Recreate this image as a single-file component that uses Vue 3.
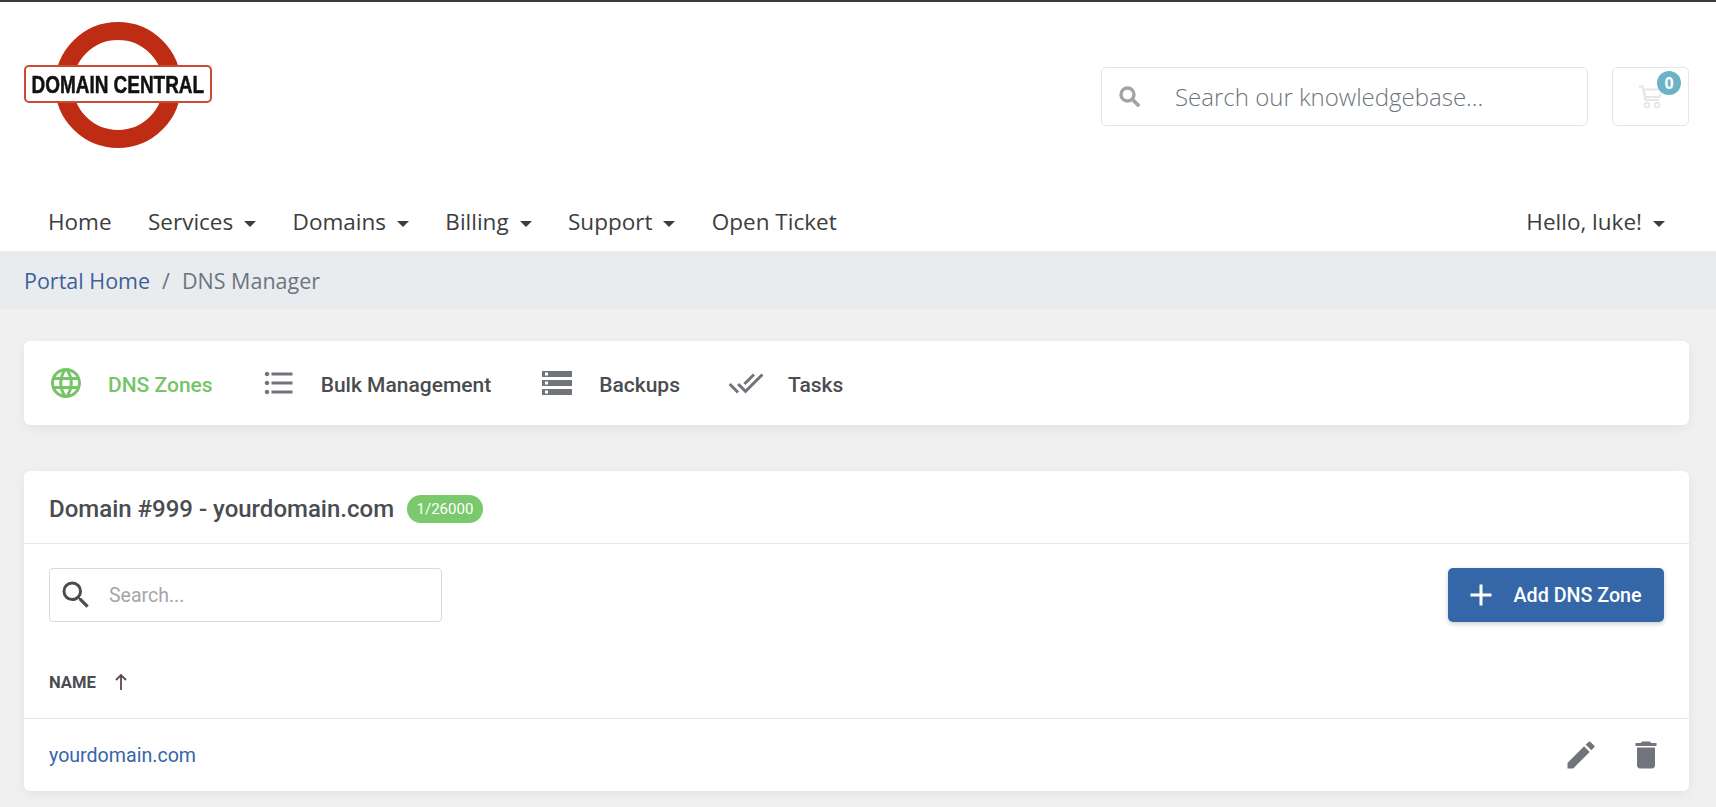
<script setup>
const navItems = [
  { label: 'Home' },
  { label: 'Services', caret: true },
  { label: 'Domains', caret: true },
  { label: 'Billing', caret: true },
  { label: 'Support', caret: true },
  { label: 'Open Ticket' },
]
</script>

<template>
  <div class="page">
    <header class="header">
      <div class="brand-row">
        <svg class="logo" width="190" height="128" viewBox="0 0 190 128">
          <circle cx="95" cy="63" r="54" fill="none" stroke="#bf2c14" stroke-width="18" />
          <rect x="2" y="44" width="186" height="36" rx="4" fill="#fff" stroke="#cc4a33" stroke-width="2" />
          <text class="logo-text" transform="translate(8.500 71) scale(0.79 1)">DOMAIN CENTRAL</text>
        </svg>
        <div class="tools">
          <div class="kb-search">
            <svg class="kb-icon" width="21" height="21" viewBox="0 0 21 21">
              <circle cx="8.5" cy="8.5" r="6.5" fill="none" stroke="#a3a3a3" stroke-width="3.4" />
              <path d="M13.5 13.5 19 19" stroke="#a3a3a3" stroke-width="3.8" stroke-linecap="round" />
            </svg>
            <span class="kb-placeholder">Search our knowledgebase...</span>
          </div>
          <div class="cart">
            <svg width="25" height="25" viewBox="0 0 25 25">
              <path d="M0.5 2.500h4l3 13.500h13.500" fill="none" stroke="#e6e6e6" stroke-width="2" />
              <path d="M5.500 5.500h18.500l-2.500 7.500H7.500z" fill="none" stroke="#e6e6e6" stroke-width="2" />
              <circle cx="9" cy="21" r="2.400" fill="none" stroke="#e6e6e6" stroke-width="1.800" />
              <circle cx="19" cy="21" r="2.400" fill="none" stroke="#e6e6e6" stroke-width="1.800" />
            </svg>
            <span class="cart-badge">0</span>
          </div>
        </div>
      </div>
      <nav class="nav">
        <a v-for="item in navItems" :key="item.label" class="nav-item">
          {{ item.label }}<i v-if="item.caret" class="caret"></i>
        </a>
        <a class="nav-item nav-user">Hello, luke!<i class="caret"></i></a>
      </nav>
    </header>

    <div class="crumbs">
      <a class="crumb-link">Portal Home</a>
      <span class="crumb-sep">/</span>
      <span class="crumb-current">DNS Manager</span>
    </div>

    <main class="content">
      <section class="card tabs">
        <a class="tab tab-active">
          <svg width="36" height="36" viewBox="0 0 24 24" fill="#75c568">
            <path d="M11.99 2C6.47 2 2 6.48 2 12s4.47 10 9.99 10C17.52 22 22 17.52 22 12S17.52 2 11.99 2zm6.93 6h-2.95c-.32-1.25-.78-2.45-1.38-3.56 1.84.63 3.37 1.91 4.33 3.56zM12 4.04c.83 1.2 1.48 2.53 1.91 3.96h-3.82c.43-1.43 1.08-2.76 1.91-3.96zM4.26 14C4.1 13.36 4 12.69 4 12s.1-1.36.26-2h3.38c-.08.66-.14 1.32-.14 2 0 .68.06 1.34.14 2H4.26zm.82 2h2.95c.32 1.25.78 2.45 1.38 3.56-1.84-.63-3.37-1.9-4.33-3.56zm2.95-8H5.08c.96-1.66 2.49-2.93 4.33-3.56C8.81 5.55 8.35 6.75 8.03 8zM12 19.96c-.83-1.2-1.48-2.53-1.91-3.96h3.82c-.43 1.43-1.08 2.76-1.91 3.96zM14.34 14H9.66c-.09-.66-.16-1.32-.16-2 0-.68.07-1.35.16-2h4.68c.09.65.16 1.32.16 2 0 .68-.07 1.34-.16 2zm.25 5.56c.6-1.11 1.06-2.31 1.38-3.56h2.95c-.96 1.65-2.49 2.93-4.33 3.56zM16.36 14c.08-.66.14-1.32.14-2 0-.68-.06-1.34-.14-2h3.38c.16.64.26 1.31.26 2s-.1 1.36-.26 2h-3.38z" />
          </svg>
          <span>DNS Zones</span>
        </a>
        <a class="tab">
          <svg width="36" height="36" viewBox="0 0 24 24" fill="#71757b">
            <path d="M4 10.5c-.83 0-1.5.67-1.5 1.5s.67 1.5 1.5 1.5 1.5-.67 1.5-1.5-.67-1.5-1.5-1.5zm0-6c-.83 0-1.5.67-1.5 1.5S3.17 7.500 4 7.500 5.500 6.830 5.500 6 4.830 4.500 4 4.500zm0 12c-.83 0-1.5.68-1.5 1.5s.68 1.5 1.5 1.5 1.5-.68 1.5-1.5-.67-1.5-1.5-1.5zM7 19h14v-2H7v2zm0-6h14v-2H7v2zm0-8v2h14V5H7z" />
          </svg>
          <span>Bulk Management</span>
        </a>
        <a class="tab">
          <svg width="36" height="36" viewBox="0 0 24 24" fill="#71757b">
            <path d="M2 20h20v-4H2v4zm2-3h2v2H4v-2zM2 4v4h20V4H2zm4 3H4V5h2v2zm-4 7h20v-4H2v4zm2-3h2v2H4v-2z" />
          </svg>
          <span>Backups</span>
        </a>
        <a class="tab">
          <svg width="36" height="36" viewBox="0 0 24 24" fill="#71757b">
            <path d="M18 7l-1.41-1.41-6.34 6.34 1.41 1.41L18 7zm4.24-1.41L11.66 16.17 7.48 12l-1.41 1.41L11.66 19l12-12-1.42-1.41zM.41 13.41L6 19l1.41-1.41L1.83 12 .41 13.41z" />
          </svg>
          <span>Tasks</span>
        </a>
      </section>

      <section class="card panel">
        <div class="panel-head">
          <h2 class="panel-title">Domain #999 - yourdomain.com</h2>
          <span class="pill">1/26000</span>
        </div>
        <div class="toolbar">
          <div class="search">
            <svg width="36" height="36" viewBox="0 0 24 24" fill="#4a4c50">
              <path d="M15.500 14h-.790l-.280-.270A6.470 6.470 0 0 0 16 9.500 6.500 6.500 0 1 0 9.500 16c1.610 0 3.090-.590 4.230-1.570l.270.280v.790l5 4.990L20.490 19l-4.990-5zm-6 0C7.010 14 5 11.990 5 9.500S7.010 5 9.500 5 14 7.010 14 9.500 11.990 14 9.500 14z" />
            </svg>
            <span class="search-placeholder">Search...</span>
          </div>
          <button class="add-btn">
            <svg width="36" height="36" viewBox="0 0 24 24" fill="#fff">
              <path d="M19 13h-6v6h-2v-6H5v-2h6V5h2v6h6v2z" />
            </svg>
            <span>Add DNS Zone</span>
          </button>
        </div>
        <div class="table-head">
          <span class="col-name">NAME</span>
          <svg width="14" height="18" viewBox="0 0 14 18" fill="none" stroke="#5b4b4b" stroke-width="1.800">
            <path d="M7 17V2M2 7l5-5 5 5" />
          </svg>
        </div>
        <div class="table-row">
          <a class="domain-link">yourdomain.com</a>
          <div class="row-actions">
            <svg width="36" height="36" viewBox="0 0 24 24" fill="#71757b">
              <path d="M3 17.250V21h3.750L17.810 9.940l-3.750-3.750L3 17.250zM20.710 7.040a1 1 0 0 0 0-1.410l-2.340-2.340a1 1 0 0 0-1.410 0l-1.830 1.830 3.750 3.750 1.830-1.830z" />
            </svg>
            <svg width="36" height="36" viewBox="0 0 24 24" fill="#71757b">
              <path d="M6 19c0 1.100.900 2 2 2h8c1.100 0 2-.900 2-2V7H6v12zM19 4h-3.500l-1-1h-5l-1 1H5v2h14V4z" />
            </svg>
          </div>
        </div>
      </section>
    </main>
  </div>
</template>

<style>
html, body { margin: 0; padding: 0; background: #f0f0f0; }
</style>

<style scoped>
.page {
  min-height: 807px;
  background: #f0f0f0;
  font-family: "Roboto", "Liberation Sans", sans-serif;
  overflow: hidden;
}
.header {
  background: #fff;
  border-top: 2px solid #3c3c3c;
}
.brand-row {
  display: flex;
  justify-content: space-between;
  align-items: flex-start;
  height: 189px;
  padding: 20px 27px 0 23px;
  box-sizing: border-box;
}
.logo { filter: blur(0.3px); }
.logo-text {
  font-family: "Liberation Sans", sans-serif;
  font-weight: 700;
  font-size: 24px;
  fill: #111;
  stroke: #111;
  stroke-width: 0.5px;
}
.tools { display: flex; gap: 24px; margin-top: 45px; }
.kb-search, .cart {
  height: 59px;
  box-sizing: border-box;
  border: 1px solid #e6e6e6;
  border-radius: 5px;
  display: flex;
  align-items: center;
  background: #fff;
}
.kb-search { width: 487px; padding-left: 17px; }
.kb-placeholder {
  margin-left: 35px;
  font-family: "Open Sans", sans-serif;
  font-weight: 300;
  font-size: 24px;
  color: #6c757d;
}
.cart { width: 77px; position: relative; padding-left: 25px; }
.cart-badge {
  position: absolute;
  top: 3px;
  right: 7px;
  width: 24px;
  height: 24px;
  border-radius: 50%;
  background: #6cb2c7;
  color: #fff;
  font: 700 16px/24px "Open Sans", sans-serif;
  text-align: center;
}
.nav {
  display: flex;
  height: 60px;
  padding: 0 27px 0 29.500px;
  align-items: center;
  font-family: "Open Sans", sans-serif;
  font-size: 22.500px;
  color: #3d3d3d;
}
.nav-item { padding: 0 18.200px; white-space: nowrap; }
.nav-item:first-child { padding-left: 18.500px; }
.nav-user { margin-left: auto; padding-right: 24px; }
.caret {
  display: inline-block;
  margin-left: 11px;
  vertical-align: 3px;
  border-top: 6px solid #3d3d3d;
  border-left: 6px solid transparent;
  border-right: 6px solid transparent;
}
.crumbs {
  height: 58px;
  background: #e9ecef;
  padding-left: 24px;
  display: flex;
  align-items: center;
  font-family: "Open Sans", sans-serif;
  font-size: 21.500px;
  color: #6c757d;
}
.crumb-link { color: #3e5f97; }
.crumb-sep { margin: 0 12px; }
.content { padding: 32px 27px 0 24px; }
.card {
  background: #fff;
  border-radius: 6px;
  box-shadow: 0 3px 12px rgba(0, 0, 0, 0.06);
}
.tabs {
  height: 84px;
  display: flex;
  align-items: center;
  padding-left: 24px;
  gap: 48px;
  font-size: 21px;
  font-weight: 500;
  color: #4a4c50;
}
.tab { display: flex; align-items: center; gap: 24px; }
.tab span { padding-top: 4px; }
.tab-active { color: #75c568; }
.panel { margin-top: 46px; }
.panel-head {
  height: 73px;
  border-bottom: 1px solid #e9e9ec;
  display: flex;
  align-items: center;
  padding: 0 0 0 25px;
  gap: 13px;
  box-sizing: border-box;
}
.panel-title { margin: 0; padding-top: 3px; font-size: 24px; font-weight: 500; color: #4a4c50; }
.pill {
  height: 28px;
  padding: 0 9.500px;
  border-radius: 14px;
  background: #7ac96d;
  color: #fff;
  font-size: 15px;
  line-height: 28px;
  margin-top: 3px;
}
.toolbar {
  display: flex;
  justify-content: space-between;
  padding: 24px 25px 0 25px;
}
.search {
  width: 393px;
  height: 54px;
  box-sizing: border-box;
  border: 1px solid #d9d9df;
  border-radius: 4px;
  display: flex;
  align-items: center;
  padding-left: 8px;
  gap: 15px;
}
.search-placeholder { font-size: 19.500px; color: #a5a5a8; }
.add-btn {
  width: 216px;
  height: 54px;
  border: 0;
  border-radius: 5px;
  background: #3566a8;
  color: #fff;
  font-family: inherit;
  font-size: 19.700px;
  font-weight: 500;
  display: flex;
  align-items: center;
  padding: 0 0 0 14.500px;
  gap: 15px;
  box-shadow: 0 2px 5px rgba(0, 0, 0, 0.2);
}
.table-head {
  height: 97px;
  border-bottom: 1px solid #e9e9ec;
  display: flex;
  align-items: center;
  padding: 24px 0 0 25px;
  gap: 18px;
  box-sizing: border-box;
}
.col-name { font-size: 16.600px; font-weight: 700; color: #4a4c50; }
.table-row {
  height: 72px;
  display: flex;
  align-items: center;
  justify-content: space-between;
  padding: 0 25px 0 25px;
}
.domain-link { font-size: 19.600px; color: #3566a8; }
.row-actions { display: flex; gap: 29px; }
</style>
